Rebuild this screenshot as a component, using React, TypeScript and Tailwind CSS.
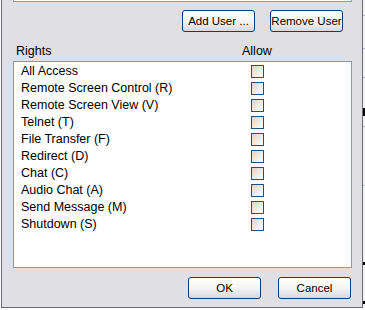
import React from "react";

const RIGHTS = [
  "All Access",
  "Remote Screen Control (R)",
  "Remote Screen View (V)",
  "Telnet (T)",
  "File Transfer (F)",
  "Redirect (D)",
  "Chat (C)",
  "Audio Chat (A)",
  "Send Message (M)",
  "Shutdown (S)",
];

function XpButton({ label }: { label: string }) {
  return (
    <button
      type="button"
      className="flex h-[22px] w-[73px] items-center justify-center whitespace-nowrap rounded-[3px] border border-[#003c74] bg-gradient-to-b from-white via-[#f5f5f2] to-[#d8d8e2] pt-px text-[11.5px] leading-none text-black"
    >
      {label}
    </button>
  );
}

function CheckBox() {
  return <div className="h-[13px] w-[13px] border border-[#1c5180] bg-gradient-to-br from-[#d6d6d0] to-white" />;
}

export default function App() {
  return (
    <div className="relative flex h-[310px] w-[365px] bg-white" style={{ fontFamily: "'Liberation Sans', Arial, sans-serif" }}>
      {/* dialog body */}
      <div className="ml-px flex h-[308px] w-[362px] flex-col border-x border-b border-[#6b6b78] bg-[#e0dfe3]">
        {/* bottom edge of the users list above */}
        <div className="ml-[11px] h-[2px] w-[339px] border-x border-b border-[#7f9db9] bg-white" />

        <div className="mt-[8px] flex gap-[15px] pl-[180px]">
          <XpButton label="Add User ..." />
          <XpButton label="Remove User" />
        </div>

        <div className="mt-[13px] flex h-[12px] items-center text-[12.5px] text-black">
          <span className="w-[240px] pl-[14px]">Rights</span>
          <span>Allow</span>
        </div>

        <div className="ml-[11px] mt-[4px] flex h-[207px] w-[339px] flex-col border border-[#7f9db9] bg-white pt-px">
          {RIGHTS.map((r) => (
            <div key={r} className="flex h-[17px] items-center text-[12.5px] text-black">
              <span className="w-[237px] pl-[7px]">{r}</span>
              <CheckBox />
            </div>
          ))}
        </div>

        <div className="mt-[9px] flex gap-[17px] pl-[186px]">
          <XpButton label="OK" />
          <XpButton label="Cancel" />
        </div>
      </div>

      {/* window behind, peeking on the right */}
      <div className="absolute right-0 top-0 h-[310px] w-[2px] bg-[#f4f4f4]">
        <div className="absolute left-0 top-[15px] h-px w-[2px] bg-[#9aaed0]" />
        <div className="absolute left-0 top-[48px] h-px w-[2px] bg-[#9aaed0]" />
        <div className="absolute left-0 top-[77px] h-px w-[2px] bg-[#9aaed0]" />
        <div className="absolute left-0 top-[108px] h-[8px] w-[2px] bg-black" />
        <div className="absolute left-0 top-[126px] h-px w-[2px] bg-[#9aaed0]" />
        <div className="absolute left-0 top-[185px] h-px w-[2px] bg-[#c0c8d8]" />
        <div className="absolute left-0 top-[262px] h-[3px] w-[2px] bg-black" />
        <div className="absolute left-0 top-[301px] h-[3px] w-[2px] bg-black" />
      </div>
    </div>
  );
}
